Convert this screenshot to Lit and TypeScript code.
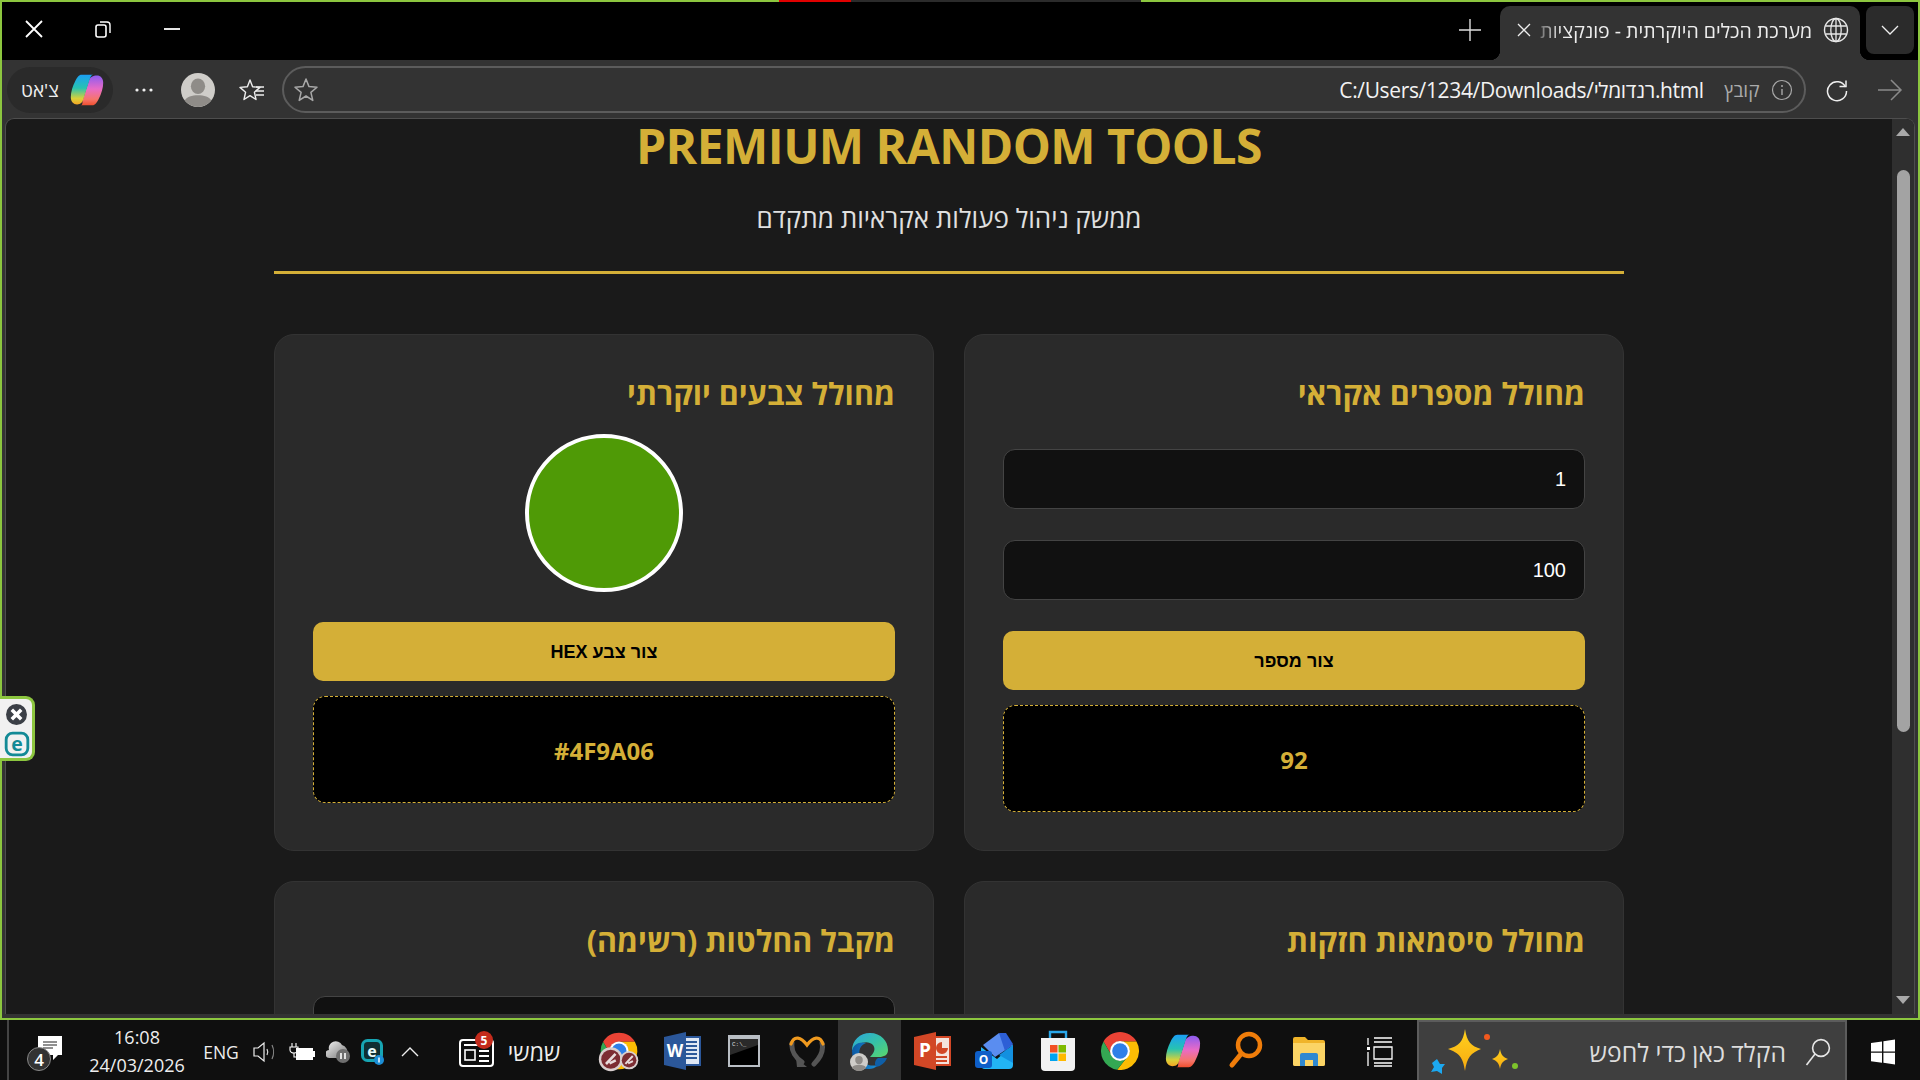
import { LitElement, html, css, svg } from "lit";
import { customElement } from "lit/decorators.js";

const S = (w: number, h: number, vb: string, body: unknown) =>
  html`<svg width=${w} height=${h} viewBox=${vb} fill="none">${body}</svg>`;

const chromeBody = svg`
  <path d="M6.68 14A20 20 0 0 1 41.32 14H24A10 10 0 0 0 15.34 29Z" fill="#ea4335"/>
  <path d="M41.32 14A20 20 0 0 1 21 43.8L32.66 29A10 10 0 0 0 24 14Z" fill="#fbbc04"/>
  <path d="M21 43.8A20 20 0 0 1 6.68 14L15.34 29A10 10 0 0 0 32.66 29Z" fill="#34a853"/>
  <circle cx="24" cy="24" r="10.5" fill="#fff"/><circle cx="24" cy="24" r="8.2" fill="#2f7fe8"/>`;

const copilot = (s: number) => S(s, s, "0 0 40 40", svg`
  <defs>
    <linearGradient id="cpa" x1="0" y1="0" x2="0" y2="1"><stop offset="0" stop-color="#1b9ff5"/><stop offset=".45" stop-color="#27c3b0"/><stop offset=".8" stop-color="#d9d13a"/><stop offset="1" stop-color="#f5a623"/></linearGradient>
    <linearGradient id="cpb" x1="0" y1="0" x2="0" y2="1"><stop offset="0" stop-color="#8d5cf0"/><stop offset=".45" stop-color="#e96bc6"/><stop offset=".8" stop-color="#f6756a"/><stop offset="1" stop-color="#f04f2f"/></linearGradient>
  </defs>
  <path d="M26 37H13C15 37 15 35 15 32L22 10C23 6 27 4 31 4C35 4 38 7 38 12C38 18 36 24 33 30C31 34 29 37 26 37Z" fill="url(#cpb)"/>
  <path d="M14 3H27C25 3 24 5 23 8L16 30C15 34 13 36 9 36C5 36 2 33 2 28C2 22 4 16 7 10C9 6 11 3 14 3Z" fill="url(#cpa)"/>`);

const person = (cx: number, cy: number, r: number) => svg`
  <circle cx=${cx} cy=${cy} r=${r} fill="#cfcdc9"/>
  <ellipse cx=${cx} cy=${cy - r * 0.22} rx=${r * 0.42} ry=${r * 0.46} fill="#8f8c88"/>
  <path d="M${cx - r * 0.78} ${cy + r * 0.62}C${cx - r * 0.6} ${cy + r * 0.2} ${cx + r * 0.6} ${cy + r * 0.2} ${cx + r * 0.78} ${cy + r * 0.62}A${r} ${r} 0 0 1 ${cx - r * 0.78} ${cy + r * 0.62}Z" fill="#8f8c88"/>`;

const badge = (cx: number, cy: number, r: number) => svg`
  <circle cx=${cx} cy=${cy} r=${r} fill="#d9cfcf"/>
  <circle cx=${cx} cy=${cy} r=${r * 0.8} fill="#7c2d33"/>
  <path d="M${cx - r * 0.4} ${cy + r * 0.4}L${cx + r * 0.4} ${cy - r * 0.45}M${cx - r * 0.1} ${cy + r * 0.35}L${cx + r * 0.42} ${cy + r * 0.1}" stroke="#e8dcdc" stroke-width=${r * 0.22}/>`;

const icons = {
  chromeBadge: S(44, 44, "0 0 48 48", svg`${chromeBody}${badge(15, 33, 13)}${badge(35, 34, 10)}`),
  word: S(40, 40, "0 0 40 40", svg`
    <rect x="18" y="6" width="20" height="28" fill="#dfe7f4" stroke="#2b579a" stroke-width="2"/>
    <path d="M22 11H35M22 15H35M22 19H35M22 23H35M22 27H35" stroke="#2b579a" stroke-width="2"/>
    <path d="M2 6L24 1V39L2 34Z" fill="#2b579a"/>
    <text x="13" y="26" text-anchor="middle" class="sv-b" font-size="17" fill="#fff">W</text>`),
  term: S(34, 36, "0 0 34 36", svg`
    <rect x="1" y="2" width="32" height="32" fill="#b9bec4"/>
    <rect x="3" y="6" width="28" height="26" fill="#000"/>
    <path d="M3 6H31V12L3 22Z" fill="#2a2a2a"/>
    <text x="5" y="13" font-size="6" fill="#ddd" class="sv">C:\\_</text>`),
  fox: S(38, 36, "0 0 38 36", svg`
    <path d="M4 10C3 18 8 25 14 29M34 10C36 18 32 25 26 31" stroke="#555" stroke-width="5" stroke-linecap="round"/>
    <path d="M8 25L19 34H9Z" fill="#555"/>
    <path d="M3 11C6 2 13 4 19 12C25 4 32 2 35 11" stroke="#f09a1f" stroke-width="3.2" stroke-linecap="round"/>`),
  edge: S(40, 40, "0 0 40 40", svg`
    <defs>
      <linearGradient id="edg" x1="0" y1="0" x2="1" y2="1"><stop offset="0" stop-color="#2ca6e0"/><stop offset=".5" stop-color="#35c1a8"/><stop offset="1" stop-color="#5bd66b"/></linearGradient>
      <linearGradient id="edb" x1="0" y1="0" x2="1" y2="0"><stop offset="0" stop-color="#0c59a4"/><stop offset="1" stop-color="#1b8fd6"/></linearGradient>
    </defs>
    <path d="M2 20C2 9 10 2 20 2C31 2 38 10 38 19C38 24 34 26 29 26H20C24 22 26 18 23 14C18 9 8 11 2 20Z" fill="url(#edg)"/>
    <path d="M2 20C3 13 10 10 16 12C10 14 8 20 10 26C12 33 20 36 28 34C25 37 22 38 19 38C9 38 2 30 2 20Z" fill="url(#edb)"/>
    <path d="M28 27H37C35 32 31 35 26 36C24 33 25 29 28 27Z" fill="#0f5fa8"/>
    ${person(9, 31, 9)}`),
  ppt: S(40, 40, "0 0 40 40", svg`
    <rect x="18" y="6" width="20" height="28" fill="#f4e3dd" stroke="#d24726" stroke-width="2"/>
    <path d="M22 26H35M22 30H35" stroke="#d24726" stroke-width="2"/>
    <path d="M30 11A6 6 0 1 0 36 17H30Z" fill="#d24726"/>
    <path d="M2 6L24 1V39L2 34Z" fill="#d24726"/>
    <text x="13" y="26" text-anchor="middle" class="sv-b" font-size="19" fill="#fff">P</text>`),
  outlook: S(40, 40, "0 0 40 40", svg`
    <path d="M8 14L24 2L38 14L20 26Z" fill="#5a8df0"/>
    <path d="M24 2L31 2L38 13L30 20Z" fill="#2d5fd6"/>
    <path d="M6 16L22 28L38 14V34A4 4 0 0 1 34 38H10A4 4 0 0 1 6 34Z" fill="#22b4f5"/>
    <path d="M38 14V32L24 24Z" fill="#1390e0"/>
    <rect x="0" y="20" width="17" height="17" rx="3" fill="#0f5fc8"/>
    <text x="8.5" y="33" text-anchor="middle" class="sv-b" font-size="12" fill="#fff">O</text>`),
  store: S(36, 42, "0 0 36 42", svg`
    <path d="M10 8V2H26V8" stroke="#2aa7ea" stroke-width="2.4"/>
    <path d="M1 8H35V37A4 4 0 0 1 31 41H5A4 4 0 0 1 1 37Z" fill="#f2f2f2"/>
    <rect x="10" y="15" width="7.5" height="7.5" fill="#f25022"/><rect x="18.5" y="15" width="7.5" height="7.5" fill="#7fba00"/>
    <rect x="10" y="23.5" width="7.5" height="7.5" fill="#00a4ef"/><rect x="18.5" y="23.5" width="7.5" height="7.5" fill="#ffb900"/>`),
  chrome: S(38, 38, "4 4 40 40", chromeBody),
  mag: S(36, 42, "0 0 36 42", svg`
    <circle cx="21" cy="15" r="11" stroke="#f07d0a" stroke-width="4.5"/>
    <path d="M13 24L4 35" stroke="#f07d0a" stroke-width="5" stroke-linecap="round"/>`),
  folder: S(34, 34, "0 0 34 34", svg`
    <path d="M1 5A2 2 0 0 1 3 3H13L16 6H31A2 2 0 0 1 33 8V30A2 2 0 0 1 31 32H3A2 2 0 0 1 1 30Z" fill="#f0b429"/>
    <path d="M1 9H33V30A2 2 0 0 1 31 32H3A2 2 0 0 1 1 30Z" fill="#fbd465"/>
    <path d="M8 32V21A2 2 0 0 1 10 19H24A2 2 0 0 1 26 21V32H21V26H13V32Z" fill="#2f88d0"/>`),
  taskview: S(26, 30, "0 0 26 30", svg`
    <path d="M7 1H25M7 5H25M7 10H25V22H7ZM7 26H25M7 29H25M1 1V8M1 15V29" stroke="#fff" stroke-width="1.3"/>
    <rect x="0" y="10" width="3" height="3" fill="#fff"/>`),
  sparkle: S(100, 60, "0 0 100 60", svg`
    <defs><linearGradient id="spk" x1="0" y1="0" x2="0" y2="1"><stop offset="0" stop-color="#ffd21f"/><stop offset="1" stop-color="#f7a90f"/></linearGradient></defs>
    <path d="M36 7C38 20 42 24 52 27C42 31 38 35 36 49C34 35 30 31 19 27C30 24 34 20 36 7Z" fill="url(#spk)"/>
    <path d="M71 27C72 33 74 35 79 37C74 39 72 41 71 47C70 41 68 39 63 37C68 35 70 33 71 27Z" fill="url(#spk)"/>
    <path d="M8 37L11 42L16 42L13 46L13 52L8 49L2 50L5 45L3 41Z" fill="#1ca8f0"/>
    <circle cx="58" cy="15" r="3" fill="#f2591e"/><circle cx="86" cy="44" r="3" fill="#7ec42c"/>`),
  windows: S(26, 26, "0 0 26 26", svg`
    <path d="M1 4L12 2.4V12.4H1ZM13.4 2.2L25 .5V12.4H13.4ZM1 13.8H12V23.8L1 22.2ZM13.4 13.8H25V25.5L13.4 23.8Z" fill="#fff"/>`),
  search: S(26, 30, "0 0 26 30", svg`
    <circle cx="16" cy="11" r="8.4" stroke="#e6e6e6" stroke-width="1.6"/>
    <path d="M10 17L1.5 28" stroke="#e6e6e6" stroke-width="1.6"/>`),
  bubble: S(26, 28, "0 0 26 28", svg`
    <path d="M1 1H25V20H21L16 25V20H1Z" fill="#fff"/>
    <path d="M6 7H20M6 10H20M6 13H16" stroke="#222" stroke-width="1.1"/>`),
  speaker: S(24, 24, "0 0 24 24", svg`
    <path d="M1 8H5L11 3V21L5 16H1Z" stroke="#eee" stroke-width="1.2"/>
    <path d="M14 9C15 11 15 13 14 15" stroke="#ddd" stroke-width="1.2"/>
    <path d="M19 5C21 9 21 15 19 19" stroke="#888" stroke-width="1.2"/>`),
  battery: S(26, 20, "0 0 26 20", svg`
    <path d="M3 1V5M7 1V5M1 5H9V8C9 10 7 11 5 11S1 10 1 8Z" stroke="#fff" stroke-width="1.1"/>
    <rect x="7" y="6" width="17" height="12" fill="#fff"/><rect x="24" y="9" width="2" height="6" fill="#fff"/>
    <path d="M5 11V15H7" stroke="#fff" stroke-width="1.1"/>`),
  cloud: S(26, 24, "0 0 26 24", svg`
    <defs><linearGradient id="cld" x1="0" y1="0" x2="1" y2="1"><stop offset="0" stop-color="#f4f4f4"/><stop offset="1" stop-color="#777"/></linearGradient></defs>
    <path d="M4 18A4 4 0 0 1 3 10A7 7 0 0 1 16 5A7 7 0 0 1 21 14V18Z" fill="url(#cld)"/>
    <circle cx="17" cy="16" r="7" fill="#6f6f6f"/>
    <path d="M15 13V19M19 13V19" stroke="#fff" stroke-width="1.6"/>`),
  esetTray: S(24, 26, "0 0 24 26", svg`
    <rect x="1.5" y="1.5" width="19" height="20" rx="5" fill="#0f2f33" stroke="#17a5b3" stroke-width="3"/>
    <text x="11" y="17.5" text-anchor="middle" class="sv-b" font-size="16" fill="#e9fbfc">e</text>
    <circle cx="18" cy="21" r="5" fill="#1b8ed6"/><rect x="17.3" y="18.5" width="1.4" height="5" fill="#fff"/>`),
  caret: S(20, 12, "0 0 20 12", svg`<path d="M2 10L10 2L18 10" stroke="#eee" stroke-width="1.4"/>`),
  news: S(36, 32, "0 0 36 32", svg`
    <rect x="1" y="4" width="33" height="26" rx="3" stroke="#fff" stroke-width="2"/>
    <path d="M5 9H24" stroke="#fff" stroke-width="2"/><rect x="6" y="14" width="10" height="10" stroke="#fff" stroke-width="1.6"/>
    <path d="M20 15H30M20 20H30M20 25H30" stroke="#fff" stroke-width="1.8"/>`),
  close: S(22, 22, "0 0 22 22", svg`<path d="M3 3L19 19M19 3L3 19" stroke="#fff" stroke-width="1.8"/>`),
  restore: S(16, 18, "0 0 16 18", svg`
    <rect x="1" y="5" width="10" height="12" rx="2" stroke="#fff" stroke-width="1.6"/>
    <path d="M5 2H12A3 3 0 0 1 15 5V13" stroke="#fff" stroke-width="1.4"/>`),
  min: S(16, 4, "0 0 16 4", svg`<path d="M0 2H16" stroke="#fff" stroke-width="1.8"/>`),
  plus: S(24, 24, "0 0 24 24", svg`<path d="M12 1V23M1 12H23" stroke="#ddd" stroke-width="1.4"/>`),
  tabx: S(14, 14, "0 0 14 14", svg`<path d="M1 1L13 13M13 1L1 13" stroke="#eee" stroke-width="1.3"/>`),
  globe: S(26, 26, "0 0 26 26", svg`
    <circle cx="13" cy="13" r="11.5" stroke="#e8e8e8" stroke-width="1.4"/>
    <ellipse cx="13" cy="13" rx="5.2" ry="11.5" stroke="#e8e8e8" stroke-width="1.3"/>
    <path d="M2.5 9H23.5M2.5 17H23.5M13 1.5V24.5" stroke="#e8e8e8" stroke-width="1.3"/>`),
  chevron: S(18, 10, "0 0 18 10", svg`<path d="M1 1L9 9L17 1" stroke="#eee" stroke-width="1.3"/>`),
  dots: S(20, 6, "0 0 20 6", svg`<circle cx="3" cy="3" r="1.6" fill="#eee"/><circle cx="10" cy="3" r="1.6" fill="#eee"/><circle cx="17" cy="3" r="1.6" fill="#eee"/>`),
  avatar: S(34, 34, "0 0 34 34", person(17, 17, 17)),
  favs: S(26, 26, "0 0 26 26", svg`
    <path d="M11 2L13.6 8.8L21 9.4L15.4 14.2L17 21.5L11 17.6L5 21.5L6.6 14.2L1 9.4L8.4 8.8Z" stroke="#eee" stroke-width="1.4" stroke-linejoin="round" transform="translate(0 1)"/>
    <path d="M17 10H25M17 14H25M17 18H25" stroke="#eee" stroke-width="1.3"/>`),
  star: S(26, 26, "0 0 26 26", svg`
    <path d="M13 2L16 9.6L24 10.2L17.9 15.4L19.8 23.4L13 19L6.2 23.4L8.1 15.4L2 10.2L10 9.6Z" stroke="#a8a8a8" stroke-width="1.5" stroke-linejoin="round"/>`),
  info: S(22, 22, "0 0 22 22", svg`
    <circle cx="11" cy="11" r="9.5" stroke="#a8a8a8" stroke-width="1.2"/>
    <path d="M11 10V16" stroke="#a8a8a8" stroke-width="1.4"/><circle cx="11" cy="7" r="1" fill="#a8a8a8"/>`),
  reload: S(24, 24, "0 0 24 24", svg`
    <path d="M20.5 9A9.5 9.5 0 1 0 21.5 13" stroke="#eee" stroke-width="1.5"/>
    <path d="M14.5 8.5H21V2.5" stroke="#eee" stroke-width="1.5"/>`),
  forward: S(26, 24, "0 0 26 24", svg`<path d="M1 12H24M14 2L24 12L14 22" stroke="#8a8a8a" stroke-width="1.5"/>`),
  arrowUp: S(14, 9, "0 0 14 9", svg`<path d="M7 0L14 8H0Z" fill="#a9a9a9"/>`),
  arrowDown: S(14, 9, "0 0 14 9", svg`<path d="M7 8L14 0H0Z" fill="#a9a9a9"/>`),
  widgetX: S(23, 23, "0 0 22 22", svg`
    <circle cx="11" cy="11" r="10" fill="#3b3f46"/>
    <path d="M6.5 6.5L15.5 15.5M15.5 6.5L6.5 15.5" stroke="#fff" stroke-width="3.4"/>`),
  widgetE: S(26, 26, "0 0 24 24", svg`
    <rect x="2" y="2" width="20" height="20" rx="6" stroke="#138a96" stroke-width="2.6"/>
    <text x="12" y="18" text-anchor="middle" class="sv-b" font-size="18" fill="#138a96">e</text>`),
};

@customElement("app-root")
export class AppRoot extends LitElement {
  static styles = css`
    :host { display: block; position: relative; width: 1920px; height: 1080px; overflow: hidden; background: #0f0f0f; font-family: "Open Sans", "Noto Sans", sans-serif; color: #fff; }
    svg { display: block; }
    .sv { font-family: "Liberation Mono", monospace; }
    .sv-b { font-family: "Open Sans", sans-serif; font-weight: 700; }
    .strip { height: 2px; background: linear-gradient(90deg, #8cc63f 779px, #e00000 779px, #e00000 851px, #2b2b2b 851px, #2b2b2b 1141px, #8cc63f 1141px); }
    .window { display: flex; flex-direction: column; height: 1018px; box-sizing: border-box; border-left: 2px solid #8cc63f; border-right: 2px solid #8cc63f; border-bottom: 2px solid #8cc63f; background: #333; }

    .titlebar { height: 58px; background: #000; display: flex; align-items: stretch; flex: none; }
    .win-ctl { width: 64px; display: flex; align-items: center; justify-content: center; height: 54px; flex: none; }
    .win-ctl.mid { width: 74px; }
    .tb-space { flex: 1; }
    .plus { width: 60px; display: flex; align-items: center; justify-content: center; height: 56px; }
    .tab { width: 360px; margin-top: 4px; background: #333; border-radius: 10px 10px 0 0; display: flex; align-items: center; padding: 0 11px 6px 17px; box-sizing: border-box; gap: 6px; position: relative; }
    .tab::before, .tab::after { content: ""; position: absolute; bottom: 0; width: 10px; height: 10px; }
    .tab::before { left: -10px; background: radial-gradient(circle at 0 0, #000 10px, #333 10.5px); }
    .tab::after { right: -10px; background: radial-gradient(circle at 100% 0, #000 10px, #333 10.5px); }
    .tab-x { flex: none; }
    .tab-t { flex: 1; min-width: 0; direction: rtl; white-space: nowrap; font-size: 19.5px; color: #eee; text-align: right; -webkit-mask-image: linear-gradient(90deg, rgba(0,0,0,.25) 0, #000 26px); mask-image: linear-gradient(90deg, rgba(0,0,0,.25) 0, #000 26px); }
    .tab-g { flex: none; margin-left: 5px; }
    .tabs-btn { width: 48px; height: 48px; margin: 4px 4px 0 6px; background: #2b2b2b; border-radius: 8px; display: flex; align-items: center; justify-content: center; position: relative; z-index: 1; }

    .toolbar { height: 58px; flex: none; display: flex; align-items: center; box-sizing: border-box; padding: 1px 6px 0 5px; background: #333; }
    .chat { width: 106px; height: 46px; flex: none; box-sizing: border-box; background: #2a2a2a; border-radius: 23px; display: flex; align-items: center; padding: 0 8px 0 14px; justify-content: space-between; }
    .chat span { font-size: 19px; color: #eee; direction: rtl; }
    .t-btn { display: flex; align-items: center; justify-content: center; flex: none; }
    .t-dots { width: 62px; } .t-av { width: 46px; } .t-fav { width: 61px; }
    .addr { width: 1524px; height: 47px; flex: none; box-sizing: border-box; border: 2px solid #5c5c5c; border-radius: 24px; display: flex; align-items: center; padding: 0 11.5px 0 9px; }
    .url { flex: 1; direction: ltr; text-align: right; font-size: 21px; letter-spacing: -.35px; color: #f2f2f2; white-space: nowrap; }
    .file { font-size: 19px; color: #aaa; margin: 0 11px 0 20.5px; direction: rtl; }
    .t-rel { width: 62px; } .t-fwd { width: 44px; }

    .page { flex: 1; min-height: 0; margin: 0 3px 0 3px; display: flex; border: 1px solid #4e4e4e; border-bottom: 0; border-radius: 9px 9px 0 0; overflow: hidden; background: #1a1a1a; }
    .main { flex: 1; min-width: 0; overflow: hidden; display: flex; justify-content: center; }
    .col { width: 1350px; flex: none; direction: rtl; }
    .head { text-align: center; border-bottom: 3px solid #d4af37; height: 152px; margin-bottom: 60px; }
    h1 { margin: 0; font-size: 48px; line-height: 54px; letter-spacing: -.55px; font-weight: 700; color: #d4af37; direction: ltr; }
    .sub { margin-top: 28px; font-size: 26px; line-height: 34px; color: #e0e0e0; }
    .grid { display: grid; grid-template-columns: 660px 660px; gap: 30px; }
    .card { background: #2a2a2a; border: 1px solid #333; border-radius: 20px; padding: 38px; box-sizing: border-box; min-height: 517px; }
    h2 { margin: 0 0 21px; font-size: 30.5px; line-height: 40px; font-weight: 700; color: #d4af37; text-align: right; }
    .fields { padding-top: 15px; display: flex; flex-direction: column; gap: 31px; margin-bottom: 31px; }
    .field { display: block; width: 100%; height: 60px; box-sizing: border-box; background: #111; border: 1px solid #444; border-radius: 12px; padding: 0 18px; color: #fff; font: 20px "Liberation Sans", Arial, sans-serif; text-align: right; outline: none; }
    .area { margin-top: 36px; height: 150px; }
    .swatch { width: 158px; height: 158px; box-sizing: border-box; border: 4px solid #fff; border-radius: 50%; background: #4f9a06; margin: 0 auto 30px; }
    .btn { display: block; width: 100%; height: 59px; border: 0; border-radius: 10px; padding: 1px 0 0; background: #d4af37; color: #000; font: 700 18px "Liberation Sans", Arial, sans-serif; }
    .result { margin-top: 15px; height: 107px; box-sizing: border-box; background: #000; border: 1px dashed #d4af37; border-radius: 12px; display: flex; align-items: center; justify-content: center; color: #d4af37; font-size: 24px; font-weight: 700; direction: ltr; padding-top: 1px; }

    .scroll { width: 22px; flex: none; background: #2f2f2f; display: flex; flex-direction: column; align-items: center; padding: 9px 0 9px; box-sizing: border-box; }
    .thumb { width: 13px; height: 562px; background: #a3a3a3; border-radius: 7px; margin-top: 33px; }
    .scroll-gap { flex: 1; }
    .bottom-gap { height: 4px; flex: none; }

    .taskbar { height: 60px; background: #0f0f0f; display: grid; grid-template-columns: 7px 2px 79px 98px 4px 62px 26px 6px 36px 38px 30px 4px 36px 19px 60px 54px 26.65px repeat(12, 62.7px) 9px 62px 6px 430px 73px; align-items: stretch; font-size: 17.5px; color: #eee; }
    .tline { background: #444; }
    .c { display: flex; align-items: center; justify-content: center; position: relative; }
    .action-b { position: absolute; left: 18px; top: 27px; width: 24px; height: 24px; border-radius: 50%; box-sizing: border-box; border: 1px solid #888; background: #333; display: flex; align-items: center; justify-content: center; font-size: 17px; font-weight: 600; color: #fff; }
    .action-i { margin: -6px 0 0 2px; }
    .clock { display: flex; flex-direction: column; align-items: center; gap: 3px; font-size: 18px; line-height: 25px; white-space: nowrap; padding-bottom: 2px; }
    .news-b { position: absolute; left: 28px; top: 11px; width: 18px; height: 18px; border-radius: 50%; background: #c42b1c; color: #fff; font-size: 12px; font-weight: 700; display: flex; align-items: center; justify-content: center; }
    .day { direction: rtl; font-size: 23px; }
    .ti { display: flex; flex-direction: column; align-items: center; }
    .ti.on { background: #333; }
    .ic { flex: 1; display: flex; align-items: center; justify-content: center; }
    .run { height: 3px; width: 48px; flex: none; }
    .run.r { background: #d75f63; }
    .run.m { background: linear-gradient(90deg, #9c4a4d 13px, #d75f63 13px); }
    .run.w { width: 100%; }
    .searchbox { background: #3f3f3f; border: 2px solid #5c5c5c; display: flex; align-items: center; justify-content: space-between; padding: 0 14px 0 10px; box-sizing: border-box; }
    .s-text { margin-left: auto; margin-right: 19px; font-size: 24.7px; color: #ddd; direction: rtl; white-space: nowrap; }

    .widget { position: absolute; left: 0; top: 696px; width: 35px; height: 65px; box-sizing: border-box; background: #f1f1f1; border: 3px solid #8cc63f; border-left: 0; border-radius: 0 9px 9px 0; display: flex; flex-direction: column; align-items: center; justify-content: center; gap: 5px; padding: 2px 0 0 1px; }
  `;

  render() {
    const i = icons;
    const dock: [unknown, string][] = [
      [i.chromeBadge, "r"], [i.word, "r"], [i.term, "m"], [i.fox, ""], [i.edge, "on"], [i.ppt, "m"],
      [i.outlook, ""], [i.store, ""], [i.chrome, ""], [copilot(38), ""], [i.mag, ""], [i.folder, "r"],
    ];
    return html`
      <div class="strip"></div>
      <div class="window">
        <div class="titlebar">
          <div class="win-ctl">${i.close}</div>
          <div class="win-ctl mid">${i.restore}</div>
          <div class="win-ctl">${i.min}</div>
          <div class="tb-space"></div>
          <div class="plus">${i.plus}</div>
          <div class="tab">
            <div class="tab-x">${i.tabx}</div>
            <div class="tab-t">מערכת הכלים היוקרתית - פונקציות</div>
            <div class="tab-g">${i.globe}</div>
          </div>
          <div class="tabs-btn">${i.chevron}</div>
        </div>
        <div class="toolbar">
          <div class="chat"><span>צ'אט</span>${copilot(36)}</div>
          <div class="t-btn t-dots">${i.dots}</div>
          <div class="t-btn t-av">${i.avatar}</div>
          <div class="t-btn t-fav">${i.favs}</div>
          <div class="addr">
            ${i.star}
            <div class="url">C:/Users/1234/Downloads/רנדומלי.html</div>
            <div class="file">קובץ</div>
            ${i.info}
          </div>
          <div class="t-btn t-rel">${i.reload}</div>
          <div class="t-btn t-fwd">${i.forward}</div>
        </div>
        <div class="page">
          <div class="main">
            <div class="col">
              <div class="head">
                <h1>PREMIUM RANDOM TOOLS</h1>
                <div class="sub">ממשק ניהול פעולות אקראיות מתקדם</div>
              </div>
              <div class="grid">
                <section class="card">
                  <h2>מחולל מספרים אקראי</h2>
                  <div class="fields">
                    <input class="field" value="1" />
                    <input class="field" value="100" />
                  </div>
                  <button class="btn">צור מספר</button>
                  <div class="result">92</div>
                </section>
                <section class="card">
                  <h2>מחולל צבעים יוקרתי</h2>
                  <div class="swatch"></div>
                  <button class="btn">צור צבע HEX</button>
                  <div class="result">#4F9A06</div>
                </section>
                <section class="card">
                  <h2>מחולל סיסמאות חזקות</h2>
                </section>
                <section class="card">
                  <h2>מקבל החלטות (רשימה)</h2>
                  <div class="field area"></div>
                </section>
              </div>
            </div>
          </div>
          <div class="scroll">
            ${i.arrowUp}
            <div class="thumb"></div>
            <div class="scroll-gap"></div>
            ${i.arrowDown}
          </div>
        </div>
        <div class="bottom-gap"></div>
      </div>
      <div class="taskbar">
        <div></div><div class="tline"></div>
        <div class="c"><div class="action-i">${i.bubble}</div><div class="action-b">4</div></div>
        <div class="c clock"><span>16:08</span><span>24/03/2026</span></div>
        <div></div>
        <div class="c">ENG</div>
        <div class="c">${i.speaker}</div>
        <div></div>
        <div class="c">${i.battery}</div>
        <div class="c">${i.cloud}</div>
        <div class="c">${i.esetTray}</div>
        <div></div>
        <div class="c">${i.caret}</div>
        <div></div>
        <div class="c">${i.news}<div class="news-b">5</div></div>
        <div class="c day">שמשי</div>
        <div></div>
        ${dock.map(([ic, k]) => html`<div class="ti ${k === "on" ? "on" : ""}">
          <div class="ic">${ic}</div>
          <div class="run ${k === "r" ? "r" : k === "m" ? "m" : k === "on" ? "r w" : ""}"></div>
        </div>`)}
        <div></div>
        <div class="c">${i.taskview}</div>
        <div></div>
        <div class="searchbox">
          ${i.sparkle}
          <div class="s-text">הקלד כאן כדי לחפש</div>
          ${i.search}
        </div>
        <div class="c">${i.windows}</div>
      </div>
      <div class="widget">${i.widgetX}${i.widgetE}</div>
    `;
  }
}
